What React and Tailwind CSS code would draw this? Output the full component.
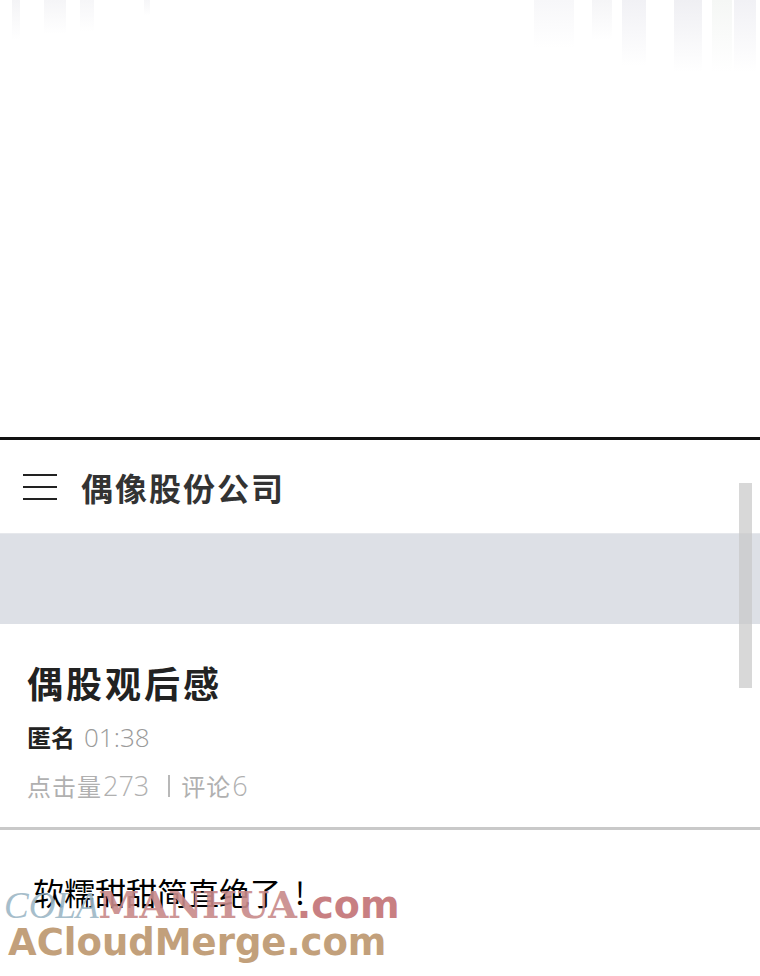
import React from 'react';

const cjk = { fontFamily: '"Noto Sans CJK SC", "Noto Sans", sans-serif' };
const num = { fontFamily: '"Open Sans", "Noto Sans", sans-serif', fontWeight: 300 };

const stripes = [
  { w: 'w-[8px]', ml: 'ml-[12px]', c: 'from-[#f4f4f6]', h: 'h-[40px]' },
  { w: 'w-[22px]', ml: 'ml-[24px]', c: 'from-[#f5f5f7]', h: 'h-[34px]' },
  { w: 'w-[14px]', ml: 'ml-[14px]', c: 'from-[#f6f6f8]', h: 'h-[32px]' },
  { w: 'w-[6px]', ml: 'ml-[50px]', c: 'from-[#f6f6f8]', h: 'h-[16px]' },
];

const rightStripes = [
  { w: 'w-[40px]', ml: 'ml-[0px]', c: 'from-[#f7f7f9]', h: 'h-[48px]' },
  { w: 'w-[20px]', ml: 'ml-[18px]', c: 'from-[#f5f5f7]', h: 'h-[40px]' },
  { w: 'w-[24px]', ml: 'ml-[10px]', c: 'from-[#f1f1f5]', h: 'h-[66px]' },
  { w: 'w-[28px]', ml: 'ml-[28px]', c: 'from-[#efeff3]', h: 'h-[72px]' },
  { w: 'w-[20px]', ml: 'ml-[10px]', c: 'from-[#f5f7f5]', h: 'h-[72px]' },
  { w: 'w-[22px]', ml: 'ml-[2px]', c: 'from-[#f1f1f5]', h: 'h-[72px]' },
];

const Stripe = ({ s }) => (
  <div className={`${s.w} ${s.ml} ${s.h} bg-gradient-to-b ${s.c} to-white`} />
);

const App = () => {
  return (
    <div className="relative w-[760px] h-[976px] overflow-hidden bg-white" style={cjk}>
      {/* faded image bottom */}
      <div className="h-[437px] flex justify-between items-start">
        <div className="flex items-start">
          {stripes.map((s, i) => <Stripe key={i} s={s} />)}
        </div>
        <div className="flex items-start mr-[4px]">
          {rightStripes.map((s, i) => <Stripe key={i} s={s} />)}
        </div>
      </div>

      <div className="h-[3px] bg-[#111]" />

      {/* header */}
      <div className="h-[93px] flex items-center pl-[23px]">
        <div className="w-[34px] flex flex-col gap-[10px]">
          <div className="h-[2px] bg-[#222]" />
          <div className="h-[2px] bg-[#222]" />
          <div className="h-[2px] bg-[#222]" />
        </div>
        <h1 className="ml-[24px] text-[32px] font-bold text-[#333] leading-none tracking-[2px]">偶像股份公司</h1>
      </div>

      {/* banner */}
      <div className="h-[91px] bg-[#dde0e6] border-t border-[#e6e8ec]" />

      {/* post */}
      <div className="px-[27px] pt-[40px] h-[203px]">
        <h2 className="text-[36px] font-bold text-[#222] leading-none tracking-[3px]">偶股观后感</h2>
        <div className="mt-[24px] flex items-center leading-none">
          <span className="font-bold text-[#222] text-[24px]">匿名</span>
          <span className="ml-[9px] text-[#9a9a9a] text-[26px]" style={num}>01:38</span>
        </div>
        <div className="mt-[22px] flex items-center text-[24px] leading-none text-[#b0b0b0]">
          <span className="tracking-[1px]">点击量</span>
          <span className="ml-[1px] text-[27px]" style={num}>273</span>
          <span className="ml-[19px] w-[2px] h-[22px] bg-[#b8b8b8]" />
          <span className="ml-[11px] tracking-[1px]">评论</span>
          <span className="ml-[1px] text-[27px]" style={num}>6</span>
        </div>
      </div>

      <div className="h-[3px] bg-[#c9c9c9]" />

      {/* comment */}
      <div className="pl-[33px] pt-[46px]">
        <p className="text-[31px] text-black leading-none">
          软糯甜甜简直绝了<span className="ml-[14px]">!</span>
        </p>
      </div>

      {/* watermark */}
      <div className="absolute left-[4px] top-[886px] flex flex-col leading-none pointer-events-none">
        <div className="flex items-baseline">
          <span className="text-[37px] italic text-[#9db7c6] opacity-90" style={{ fontFamily: '"Liberation Serif", serif' }}>COLA</span>
          <span className="text-[37px] text-[#c88a8a] opacity-90" style={{ fontFamily: '"DejaVu Serif", serif', fontWeight: 700 }}>MANHUA</span>
          <span className="text-[38px] font-bold text-[#c87f82]" style={{ fontFamily: '"DejaVu Sans", sans-serif' }}>.com</span>
        </div>
        <div className="ml-[4px] text-[37px] font-bold text-[#c2a07b]" style={{ fontFamily: '"DejaVu Sans", sans-serif' }}>
          ACloudMerge.com
        </div>
      </div>

      {/* scrollbar */}
      <div className="absolute left-[739px] top-[483px] w-[13px] h-[205px] bg-[#c8c8c8]/70" />
    </div>
  );
};

export default App;
